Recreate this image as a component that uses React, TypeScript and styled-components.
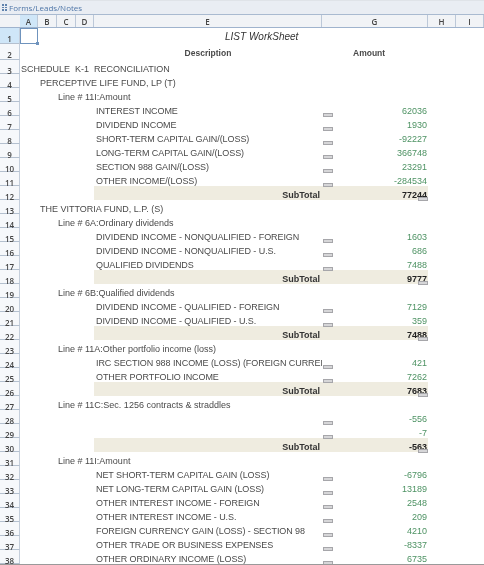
import React, { FC } from "react";
import styled, { createGlobalStyle } from "styled-components";

type Row = {
  n: number;
  level?: number;
  text?: string;
  amount?: string;
  total?: boolean;
};

const columns = [
  { name: "A", width: 18, active: true },
  { name: "B", width: 19 },
  { name: "C", width: 19 },
  { name: "D", width: 18 },
  { name: "E", width: 228 },
  { name: "G", width: 106 },
  { name: "H", width: 28 },
  { name: "I", width: 28 },
];

const rows: Row[] = [
  { n: 3, level: 0, text: "SCHEDULE  K-1  RECONCILIATION" },
  { n: 4, level: 1, text: "PERCEPTIVE LIFE FUND, LP (T)" },
  { n: 5, level: 2, text: "Line # 11I:Amount" },
  { n: 6, level: 3, text: "INTEREST INCOME", amount: "62036" },
  { n: 7, level: 3, text: "DIVIDEND INCOME", amount: "1930" },
  { n: 8, level: 3, text: "SHORT-TERM CAPITAL GAIN/(LOSS)", amount: "-92227" },
  { n: 9, level: 3, text: "LONG-TERM CAPITAL GAIN/(LOSS)", amount: "366748" },
  { n: 10, level: 3, text: "SECTION 988 GAIN/(LOSS)", amount: "23291" },
  { n: 11, level: 3, text: "OTHER INCOME/(LOSS)", amount: "-284534" },
  { n: 12, total: true, amount: "77244" },
  { n: 13, level: 1, text: "THE VITTORIA FUND, L.P. (S)" },
  { n: 14, level: 2, text: "Line # 6A:Ordinary dividends" },
  { n: 15, level: 3, text: "DIVIDEND INCOME - NONQUALIFIED - FOREIGN", amount: "1603" },
  { n: 16, level: 3, text: "DIVIDEND INCOME - NONQUALIFIED - U.S.", amount: "686" },
  { n: 17, level: 3, text: "QUALIFIED DIVIDENDS", amount: "7488" },
  { n: 18, total: true, amount: "9777" },
  { n: 19, level: 2, text: "Line # 6B:Qualified dividends" },
  { n: 20, level: 3, text: "DIVIDEND INCOME - QUALIFIED - FOREIGN", amount: "7129" },
  { n: 21, level: 3, text: "DIVIDEND INCOME - QUALIFIED - U.S.", amount: "359" },
  { n: 22, total: true, amount: "7488" },
  { n: 23, level: 2, text: "Line # 11A:Other portfolio income (loss)" },
  { n: 24, level: 3, text: "IRC SECTION 988 INCOME (LOSS) (FOREIGN CURRENCY)", amount: "421" },
  { n: 25, level: 3, text: "OTHER PORTFOLIO INCOME", amount: "7262" },
  { n: 26, total: true, amount: "7683" },
  { n: 27, level: 2, text: "Line # 11C:Sec. 1256 contracts & straddles" },
  { n: 28, level: 3, amount: "-556" },
  { n: 29, level: 3, amount: "-7" },
  { n: 30, total: true, amount: "-563" },
  { n: 31, level: 2, text: "Line # 11I:Amount" },
  { n: 32, level: 3, text: "NET SHORT-TERM CAPITAL GAIN (LOSS)", amount: "-6796" },
  { n: 33, level: 3, text: "NET LONG-TERM CAPITAL GAIN (LOSS)", amount: "13189" },
  { n: 34, level: 3, text: "OTHER INTEREST INCOME - FOREIGN", amount: "2548" },
  { n: 35, level: 3, text: "OTHER INTEREST INCOME - U.S.", amount: "209" },
  { n: 36, level: 3, text: "FOREIGN CURRENCY GAIN (LOSS) - SECTION 98", amount: "4210" },
  { n: 37, level: 3, text: "OTHER TRADE OR BUSINESS EXPENSES", amount: "-8337" },
  { n: 38, level: 3, text: "OTHER ORDINARY INCOME (LOSS)", amount: "6735" },
];

const App: FC = () => {
  return (
    <>
      <GlobalStyle />
      <Page>
        <TitleBar>
          <Grip>
            <GripDot />
            <GripDot />
            <GripDot />
            <GripDot />
            <GripDot />
            <GripDot />
          </Grip>
          Forms/Leads/Notes
        </TitleBar>
        <ColumnBar>
          <Corner />
          {columns.map((c) => (
            <ColumnHead key={c.name} $width={c.width} $active={c.active}>
              {c.name}
            </ColumnHead>
          ))}
        </ColumnBar>

        <SheetRow>
          <RowHead $active>1</RowHead>
          <SelectedCell>
            <FillHandle />
          </SelectedCell>
          <TitleCell>LIST WorkSheet</TitleCell>
        </SheetRow>
        <SheetRow>
          <RowHead>2</RowHead>
          <Spacer />
          <DescriptionHead>Description</DescriptionHead>
          <AmountHead>Amount</AmountHead>
        </SheetRow>

        {rows.map((r) => (
          <SheetRow key={r.n} $height={14}>
            <RowHead>{r.n}</RowHead>
            {r.total ? (
              <>
                <Spacer />
                <TotalBand>
                  <TotalLabel>SubTotal</TotalLabel>
                  <TotalAmount>
                    {r.amount}
                    <TotalNote />
                  </TotalAmount>
                </TotalBand>
              </>
            ) : r.level === 3 ? (
              <>
                <Spacer />
                <Label>{r.text}</Label>
                <NoteSlot>{r.amount && <Note />}</NoteSlot>
                <Amount>{r.amount}</Amount>
              </>
            ) : (
              <Heading $level={r.level ?? 0}>{r.text}</Heading>
            )}
          </SheetRow>
        ))}
      </Page>
    </>
  );
};

const GlobalStyle = createGlobalStyle`
  html, body {
    margin: 0;
    padding: 0;
    background: #ffffff;
    overflow: hidden;
  }
`;

const Page = styled.div`
  position: relative;
  width: 484px;
  height: 565px;
  box-sizing: border-box;
  border-bottom: 1px solid #9a9a9a;
  overflow: hidden;
  font-family: "Liberation Sans", Arial, sans-serif;
  font-size: 9px;
  color: #4a4a4a;
  filter: blur(0.35px);
`;

const TitleBar = styled.div`
  height: 15px;
  box-sizing: border-box;
  display: flex;
  align-items: center;
  padding-left: 2px;
  gap: 2px;
  background: #e9edf3;
  border-top: 1px solid #dfe3e8;
  border-bottom: 1px solid #a9bad0;
  font-family: "Open Sans", sans-serif;
  font-size: 8px;
  color: #4f76a8;
`;

const Grip = styled.div`
  display: grid;
  grid-template-columns: 2px 2px;
  gap: 1px;
`;

const GripDot = styled.span`
  width: 1.5px;
  height: 1.5px;
  background: #5f82ad;
`;

const ColumnBar = styled.div`
  height: 13px;
  box-sizing: border-box;
  display: flex;
  background: #f1f3f6;
  border-bottom: 1px solid #9fb3cd;
`;

const Corner = styled.div`
  width: 20px;
  flex: none;
`;

const ColumnHead = styled.div<{ $width: number; $active?: boolean }>`
  width: ${(p) => p.$width}px;
  flex: none;
  box-sizing: border-box;
  display: flex;
  align-items: center;
  justify-content: center;
  border-right: 1px solid #bcc8d8;
  background: ${(p) => (p.$active ? "#cfe6f8" : "transparent")};
  font-family: "Open Sans", sans-serif;
  font-size: 8px;
  font-weight: 600;
  color: #444;
`;

const SheetRow = styled.div<{ $height?: number }>`
  height: ${(p) => p.$height ?? 16}px;
  display: flex;
  align-items: stretch;
  white-space: pre;
`;

const RowHead = styled.div<{ $active?: boolean }>`
  width: 20px;
  flex: none;
  box-sizing: border-box;
  text-align: center;
  background: ${(p) => (p.$active ? "#cfe6f8" : "#f6f8fb")};
  border-bottom: 1px solid #b4c0cf;
  border-right: 1px solid #c4cedb;
  font-family: "Open Sans", sans-serif;
  font-size: 8px;
  font-weight: 600;
  line-height: 22px;
  color: #444;
`;

const Spacer = styled.div`
  width: 74px;
  flex: none;
`;

const SelectedCell = styled.div`
  position: relative;
  width: 18px;
  flex: none;
  box-sizing: border-box;
  border: 1px solid #6f93bd;
`;

const FillHandle = styled.span`
  position: absolute;
  right: -2px;
  bottom: -2px;
  width: 3px;
  height: 3px;
  background: #6f93bd;
`;

const TitleCell = styled.div`
  width: 334px;
  flex: none;
  margin-left: 56px;
  box-sizing: border-box;
  padding-left: 131px;
  font-size: 10px;
  font-style: italic;
  line-height: 17px;
  color: #333;
`;

const DescriptionHead = styled.div`
  width: 228px;
  flex: none;
  text-align: center;
  font-weight: bold;
  font-size: 8.5px;
  line-height: 18px;
`;

const AmountHead = styled.div`
  width: 106px;
  flex: none;
  box-sizing: border-box;
  padding-left: 31px;
  font-weight: bold;
  font-size: 8.5px;
  line-height: 18px;
`;

const Heading = styled.div<{ $level: number }>`
  padding-left: ${(p) => [1, 20, 38, 76][p.$level]}px;
  line-height: 18px;
`;

const Label = styled.div`
  width: 228px;
  flex: none;
  box-sizing: border-box;
  padding-left: 2px;
  overflow: hidden;
  letter-spacing: -0.07px;
  line-height: 18px;
`;

const NoteSlot = styled.div`
  width: 12px;
  flex: none;
  display: flex;
  justify-content: center;
  align-items: flex-end;
`;

const Note = styled.span`
  position: relative;
  z-index: 1;
  width: 8px;
  height: 2px;
  flex: none;
  margin-bottom: -1px;
  background: #d6d6d8;
  border: 1px solid #a6a6aa;
`;

const Amount = styled.div`
  width: 93px;
  flex: none;
  text-align: right;
  box-sizing: border-box;
  line-height: 18px;
  color: #4d9263;
`;

const TotalBand = styled.div`
  width: 334px;
  flex: none;
  display: flex;
  background: #efece0;
  line-height: 18px;
`;

const TotalLabel = styled.div`
  width: 226px;
  flex: none;
  text-align: right;
  font-weight: bold;
  color: #333;
`;

const TotalAmount = styled.div`
  position: relative;
  flex: 1;
  text-align: right;
  padding-right: 1px;
  font-weight: bold;
  color: #222;
`;

const TotalNote = styled.span`
  position: absolute;
  right: 0;
  bottom: -1px;
  width: 8px;
  height: 2px;
  background: #d6d6d8;
  border: 1px solid #a6a6aa;
`;

export default App;
